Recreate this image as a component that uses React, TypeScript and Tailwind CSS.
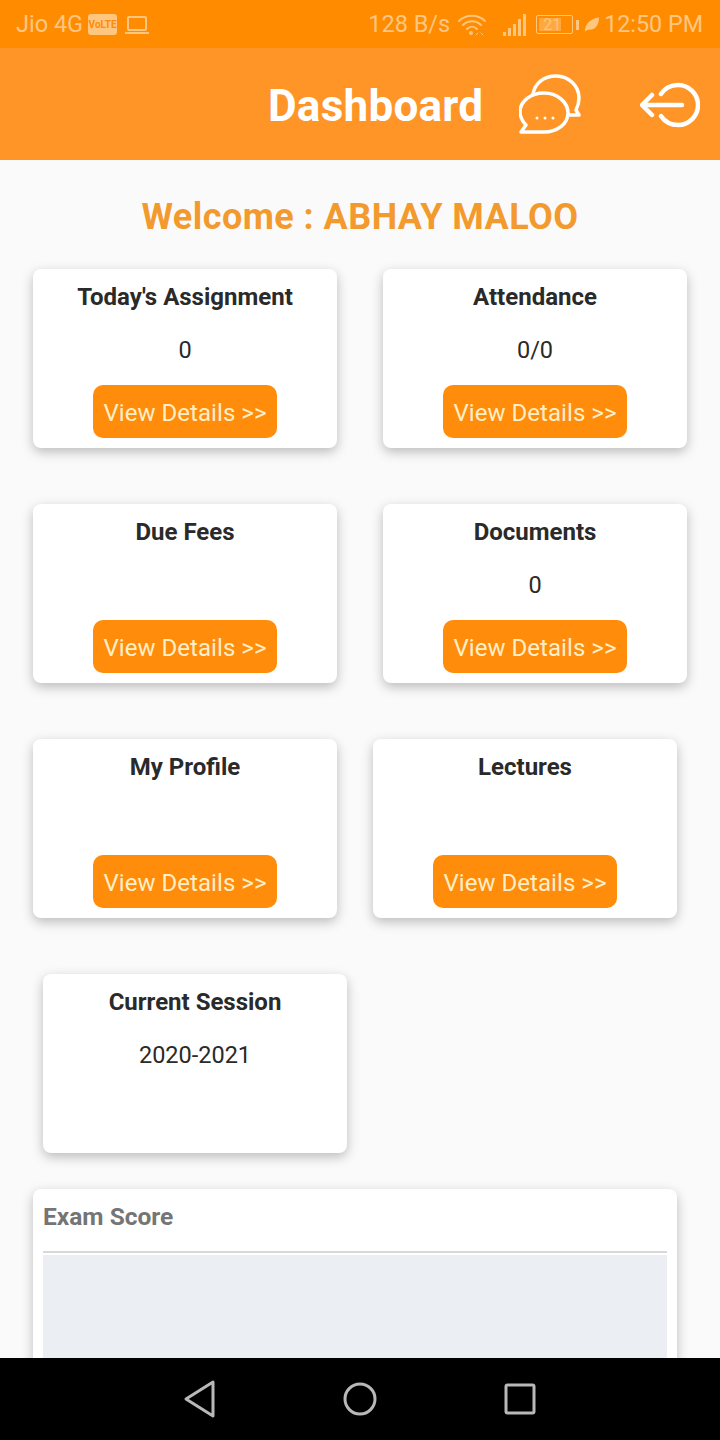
import React from 'react';

const font = { fontFamily: 'Roboto, sans-serif' };

const ChatIcon = () => (
  <svg width="62" height="60" viewBox="0 0 62 60" fill="none" stroke="white" strokeWidth="3.5" strokeLinecap="round" strokeLinejoin="round">
    {/* back bubble */}
    <path d="M14 20 C16 9 25 2 37 2 C50 2 60 12 60 24 C60 29 59 32 57 36 L60 41 L50 41" />
    {/* front bubble */}
    <path d="M2 58 L7 51 C3 47 1 43 1 38 C1 27 12 19 25 19 C38 19 49 28 49 39 C49 50 38 58 25 58 Z" />
    <circle cx="18" cy="44" r="1.5" fill="white" stroke="none" />
    <circle cx="26" cy="44" r="1.5" fill="white" stroke="none" />
    <circle cx="34" cy="44" r="1.5" fill="white" stroke="none" />
  </svg>
);

const LogoutIcon = () => (
  <svg width="60" height="46" viewBox="0 0 60 46" fill="none" stroke="white" strokeWidth="4.5" strokeLinecap="round" strokeLinejoin="round">
    <path d="M21 12 C25 6 31 3 38 3 C49 3 58 12 58 23 C58 34 49 43 38 43 C31 43 25 40 21 34" />
    <path d="M42 23 L3 23" />
    <path d="M12 13 L2 23 L12 33" />
  </svg>
);

const StatusLeft = () => (
  <div className="flex items-center">
    <span className="text-[23.5px] leading-none ml-[16px]">Jio 4G</span>
    <span className="ml-[5px] w-[29px] h-[21px] rounded-[3px] bg-[#ffc680] text-[#ff8c00] text-[10px] font-bold flex items-center justify-center">VoLTE</span>
    <svg className="ml-[8px]" width="24" height="20" viewBox="0 0 24 20" fill="none" stroke="#ffc680" strokeWidth="2">
      <rect x="3" y="2" width="18" height="13" rx="1" />
      <path d="M0 18 H24" />
    </svg>
  </div>
);

const StatusRight = () => (
  <div className="flex items-center">
    <span className="text-[23.5px] leading-none">128 B/s</span>
    <svg className="ml-[8px]" width="28" height="24" viewBox="0 0 28 24" fill="none" stroke="#ffc680" strokeWidth="2" strokeLinecap="round">
      <path d="M1 8 C8 1 20 1 27 8" />
      <path d="M5 12 C10 7 18 7 23 12" />
      <path d="M9 16 C12 13 16 13 19 16" />
      <circle cx="13" cy="20" r="2" fill="#ffc680" stroke="none" />
      <path d="M20 20 L18 22 M23 20 L25 22" strokeWidth="1" />
    </svg>
    <svg className="ml-[17px]" width="24" height="22" viewBox="0 0 24 22" fill="#ffc680">
      <rect x="0" y="18" width="3" height="4" />
      <rect x="5" y="14" width="3" height="8" />
      <rect x="10" y="10" width="3" height="12" />
      <rect x="15" y="5" width="3" height="17" />
      <rect x="20" y="0" width="3" height="22" />
    </svg>
    <div className="ml-[9px] w-[37px] h-[19px] border border-[#ffc680] rounded-[2px] flex items-center p-[2px]">
      <span className="w-[22px] h-full bg-[#ffa83f] text-[16px] leading-none flex items-center justify-end">21</span>
    </div>
    <span className="ml-[3px] w-[3px] h-[10px] bg-[#ffc680]" />
    <svg className="ml-[5px]" width="15" height="16" viewBox="0 0 16 16" fill="#ffc680">
      <path d="M1 15 C1 7 7 1 16 0 C16 9 11 14 4 13 L1 15 Z" />
    </svg>
    <span className="text-[23.3px] leading-none ml-[5px]">12:50 PM</span>
  </div>
);

const Card = ({ title, value, button = true }: { title: string; value?: string; button?: boolean }) => (
  <div className="w-[304px] h-[179px] bg-white rounded-[8px] shadow-[0_4px_12px_rgba(0,0,0,0.25)] flex flex-col items-center">
    <div className="mt-[12px] h-[32px] leading-[32px] text-[24px] font-bold text-[#2a2a2a]">{title}</div>
    <div className="mt-[21px] h-[32px] leading-[32px] text-[23.5px] text-[#2a2a2a]">{value}</div>
    {button && (
      <div className="mt-[19px] w-[184px] h-[53px] pt-[2px] rounded-[10px] bg-[#ff8c0a] text-[#ffefc8] text-[24px] tracking-[0.05px] flex items-center justify-center">
        View Details &gt;&gt;
      </div>
    )}
  </div>
);

export default function App() {
  return (
    <div className="w-[720px] h-[1440px] flex flex-col bg-[#fafafa] overflow-hidden" style={font}>
      <div className="h-[48px] shrink-0 bg-[#ff8c00] text-[#ffc680] flex items-center justify-between pr-[17px] pt-[1px]">
        <StatusLeft />
        <StatusRight />
      </div>

      <div className="h-[112px] shrink-0 bg-[#ff9527] flex items-center text-white">
        <span className="ml-[268px] pt-[3px] text-[44px] tracking-[0.25px] font-bold leading-none">Dashboard</span>
        <span className="ml-[36px]"><ChatIcon /></span>
        <span className="ml-[59px] pt-[2px]"><LogoutIcon /></span>
      </div>

      <div className="flex-1 min-h-0 overflow-hidden">
        <h1 className="mt-[36px] h-[42px] leading-[42px] text-center text-[36px] tracking-[0.45px] font-bold text-[#f39a2e]">Welcome : ABHAY MALOO</h1>

        <div className="mt-[31px] ml-[33px] flex gap-[46px]">
          <Card title="Today's Assignment" value="0" />
          <Card title="Attendance" value="0/0" />
        </div>
        <div className="mt-[56px] ml-[33px] flex gap-[46px]">
          <Card title="Due Fees" />
          <Card title="Documents" value="0" />
        </div>
        <div className="mt-[56px] ml-[33px] flex gap-[36px]">
          <Card title="My Profile" />
          <Card title="Lectures" />
        </div>
        <div className="mt-[56px] ml-[43px] flex">
          <Card title="Current Session" value="2020-2021" button={false} />
        </div>

        <div className="mt-[36px] ml-[33px] w-[644px] h-[300px] bg-white rounded-[8px] shadow-[0_4px_12px_rgba(0,0,0,0.25)] px-[10px]">
          <div className="pt-[12px] h-[50px] leading-[32px] text-[24.5px] font-bold text-[#757575] border-b-2 border-[#d8d8d8] box-content">
            Exam Score
          </div>
          <div className="mt-[2px] h-[200px] bg-[#ebeef2]" />
        </div>
      </div>

      <div className="h-[82px] shrink-0 bg-black flex items-center justify-center gap-[92px]">
        <svg width="68" height="40" viewBox="0 0 68 40" fill="none" stroke="#b8b8b8" strokeWidth="3" strokeLinejoin="round">
          <path d="M47 3 L20 20 L47 37 Z" />
        </svg>
        <svg width="68" height="40" viewBox="0 0 68 40" fill="none" stroke="#b8b8b8" strokeWidth="3">
          <circle cx="34" cy="20" r="15" />
        </svg>
        <svg width="68" height="40" viewBox="0 0 68 40" fill="none" stroke="#b8b8b8" strokeWidth="3" strokeLinejoin="round">
          <rect x="20" y="6" width="28" height="28" rx="1.5" />
        </svg>
      </div>
    </div>
  );
}
